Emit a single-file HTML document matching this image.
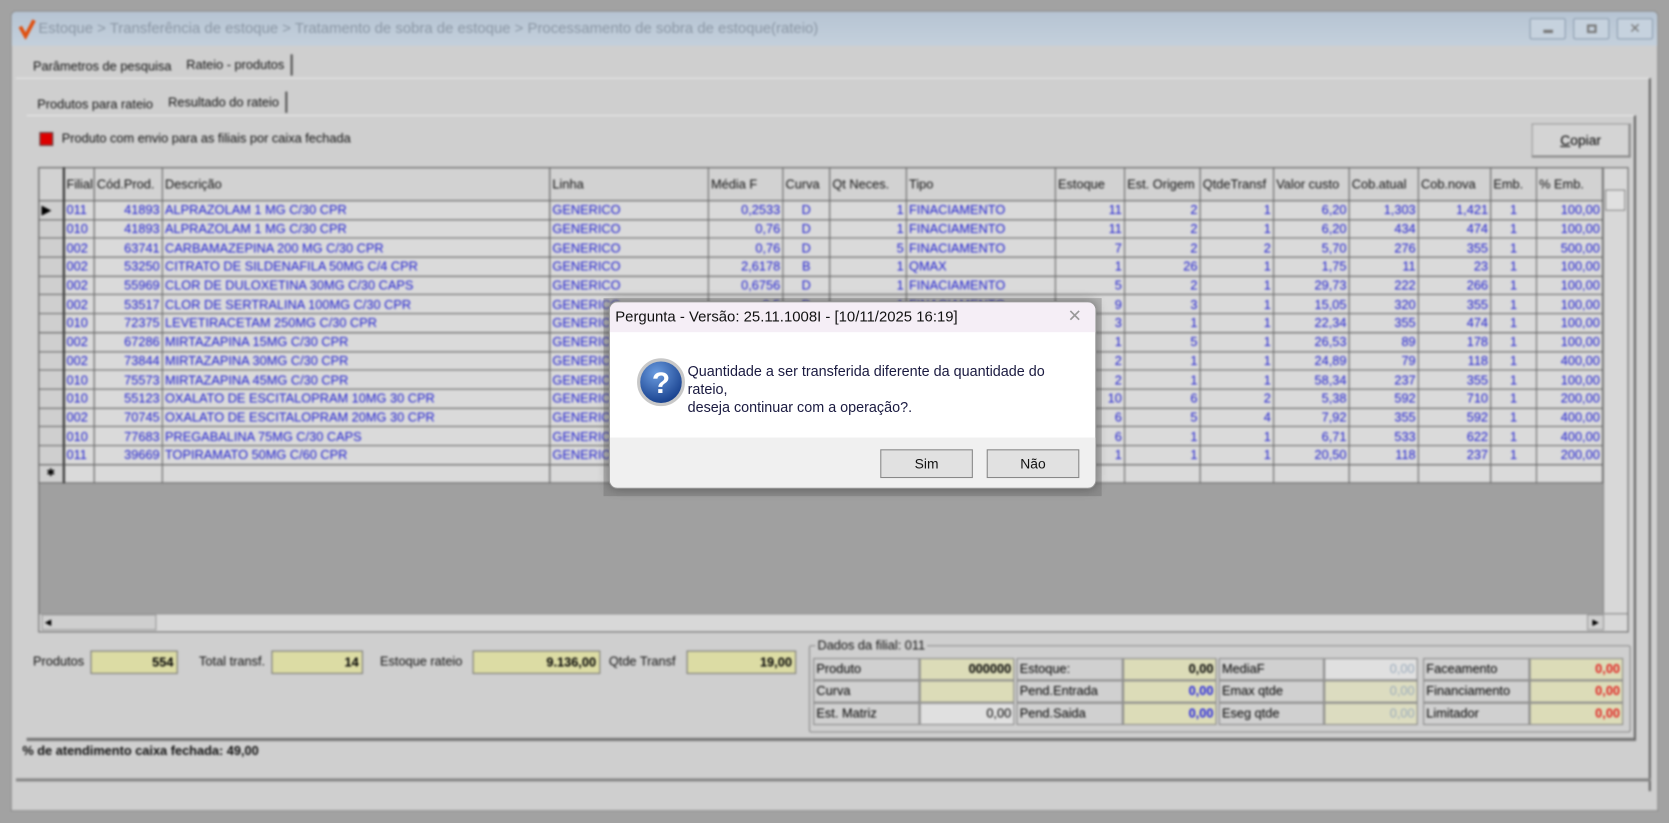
<!DOCTYPE html>
<html><head><meta charset="utf-8"><style>
*{box-sizing:border-box;margin:0;padding:0}
html,body{width:1669px;height:823px;overflow:hidden;background:#a2a2a2}
#s{position:absolute;left:0;top:0;width:1568px;height:773px;transform:scale(1.06441,1.0647);transform-origin:0 0;font-family:"Liberation Sans Narrow","Liberation Sans",sans-serif}
#bg{position:absolute;left:0;top:0;width:1568px;height:773px;filter:blur(0.9px);background:#a2a2a2}
.a{position:absolute}
.win{left:10px;top:10px;width:1548px;height:752px;background:#cfcfcf;border:1px solid #8a8a8a;border-radius:5px 5px 0 0}
.tb{left:0;top:0;width:1546px;height:32px;background:linear-gradient(#b6c4d3,#c4d0dc);border-radius:4px 4px 0 0}
.tt{left:25px;top:7px;font-size:14px;color:#8a96a4;font-family:"Liberation Sans",sans-serif}
.wb{top:6px;width:34px;height:20px;border:1px solid #8c9cae;background:#c6d2de;border-radius:2px}
.tab{font-size:12px;color:#111;height:20px;padding:3px 6px}
table{border-collapse:collapse;table-layout:fixed;font-size:12px}
td{border:1px solid #6c6c6c;height:17.7px;padding:0 2px;white-space:nowrap;overflow:hidden;color:#2020d0;line-height:16px}
th{border:1px solid #6c6c6c;height:31px;font-weight:normal;text-align:left;padding:0 2px;color:#111;background:#d2d2d2;white-space:nowrap;overflow:hidden}
td.r{text-align:right}td.c{text-align:center}
td.h{background:#cfcfcf;border-right:2px solid #333}
tbody tr{background:#dadada}
.lbl{font-size:12px;color:#111}
.yb{background:#dcdca4;border:1px solid #777;font-size:12px;font-weight:bold;text-align:right;padding:1px 3px;height:22px;line-height:18px}
.fc{border:1px solid #888;font-size:12px;height:21px;line-height:19px;padding:0 2px;background:#d0d0d0}
.fy{background:#dcdcb8;text-align:right;font-weight:bold}
#dlg{left:572px;top:283px;width:458px;height:176px;background:#fff;border:1px solid #999;border-radius:8px;overflow:hidden;box-shadow:0 0 10px rgba(0,0,0,.35);font-family:"Liberation Sans",sans-serif}
.btn{top:138px;width:87px;height:27px;border:1px solid #888;background:#e1e1e1;font-size:13px;text-align:center;line-height:25px;color:#111}
</style></head><body><div id="s">
<div id="bg">
<div class="a win">
 <div class="a tb"></div>
 <svg class="a" style="left:6px;top:6px" width="18" height="20"><path d="M2 8 L7 17 L15 2" stroke="#e05010" stroke-width="3.5" fill="none"/></svg>
 <div class="a tt">Estoque &gt; Transferência de estoque &gt; Tratamento de sobra de estoque &gt; Processamento de sobra de estoque(rateio)</div>
 <div class="a wb" style="left:1426px"><div class="a" style="left:12px;top:10px;width:9px;height:3px;background:#777"></div></div>
 <div class="a wb" style="left:1467px"><div class="a" style="left:12px;top:5px;width:9px;height:8px;border:2px solid #777"></div></div>
 <div class="a wb" style="left:1508px;font-size:13px;color:#777;text-align:center;line-height:18px">✕</div>
 <div class="a tab" style="left:14px;top:41px">Parâmetros de pesquisa</div>
 <div class="a tab" style="left:158px;top:40px;border-right:2px solid #555">Rateio - produtos</div>
 <div class="a" style="left:4px;top:62px;width:1536px;height:670px;border-top:1px solid #e8e8e8;border-right:2px solid #666"></div>
 <div class="a tab" style="left:18px;top:77px">Produtos para rateio</div>
 <div class="a tab" style="left:141px;top:75px;border-right:2px solid #555">Resultado do rateio</div>
 <div class="a" style="left:14px;top:97px;width:1512px;height:588px;border-top:1px solid #e8e8e8;border-right:2px solid #666;border-bottom:3px solid #777"></div>
 <div class="a" style="left:26px;top:113px;width:13px;height:13px;background:#d00;border:1px solid #555"></div>
 <div class="a lbl" style="left:47px;top:112px">Produto com envio para as filiais por caixa fechada</div>
 <div class="a" style="left:1428px;top:105px;width:93px;height:32px;border:1px solid #999;border-bottom:2px solid #888;border-right:2px solid #888;background:#d4d4d4;font-size:13px;text-align:center;line-height:30px"><u>C</u>opiar</div>
 <div class="a" style="left:25px;top:146px;width:1494px;height:437px;background:#a0a0a0;border:1px solid #666"></div>
 <table class="a" style="left:25px;top:146px;width:1470px">
 <colgroup><col style="width:23px"><col style="width:29px"><col style="width:64px"><col style="width:364px"><col style="width:149px"><col style="width:70px"><col style="width:44px"><col style="width:72px"><col style="width:140px"><col style="width:65px"><col style="width:71px"><col style="width:69px"><col style="width:71px"><col style="width:65px"><col style="width:68px"><col style="width:43px"><col style="width:62px"></colgroup>
 <thead><tr><th style="border-right:2px solid #333"></th><th>Filial</th><th>Cód.Prod.</th><th>Descrição</th><th>Linha</th><th>Média F</th><th>Curva</th><th>Qt Neces.</th><th>Tipo</th><th>Estoque</th><th>Est. Origem</th><th>QtdeTransf</th><th>Valor custo</th><th>Cob.atual</th><th>Cob.nova</th><th>Emb.</th><th>% Emb.</th></tr></thead>
 <tbody>
 <tr><td class="h" style="color:#000">▶</td><td>011</td><td class="r">41893</td><td>ALPRAZOLAM 1 MG C/30 CPR</td><td>GENERICO</td><td class="r">0,2533</td><td class="c">D</td><td class="r">1</td><td>FINACIAMENTO</td><td class="r">11</td><td class="r">2</td><td class="r">1</td><td class="r">6,20</td><td class="r">1,303</td><td class="r">1,421</td><td class="c">1</td><td class="r">100,00</td></tr>
 <tr><td class="h"></td><td>010</td><td class="r">41893</td><td>ALPRAZOLAM 1 MG C/30 CPR</td><td>GENERICO</td><td class="r">0,76</td><td class="c">D</td><td class="r">1</td><td>FINACIAMENTO</td><td class="r">11</td><td class="r">2</td><td class="r">1</td><td class="r">6,20</td><td class="r">434</td><td class="r">474</td><td class="c">1</td><td class="r">100,00</td></tr>
 <tr><td class="h"></td><td>002</td><td class="r">63741</td><td>CARBAMAZEPINA 200 MG C/30 CPR</td><td>GENERICO</td><td class="r">0,76</td><td class="c">D</td><td class="r">5</td><td>FINACIAMENTO</td><td class="r">7</td><td class="r">2</td><td class="r">2</td><td class="r">5,70</td><td class="r">276</td><td class="r">355</td><td class="c">1</td><td class="r">500,00</td></tr>
 <tr><td class="h"></td><td>002</td><td class="r">53250</td><td>CITRATO DE SILDENAFILA 50MG C/4 CPR</td><td>GENERICO</td><td class="r">2,6178</td><td class="c">B</td><td class="r">1</td><td>QMAX</td><td class="r">1</td><td class="r">26</td><td class="r">1</td><td class="r">1,75</td><td class="r">11</td><td class="r">23</td><td class="c">1</td><td class="r">100,00</td></tr>
 <tr><td class="h"></td><td>002</td><td class="r">55969</td><td>CLOR DE DULOXETINA 30MG C/30 CAPS</td><td>GENERICO</td><td class="r">0,6756</td><td class="c">D</td><td class="r">1</td><td>FINACIAMENTO</td><td class="r">5</td><td class="r">2</td><td class="r">1</td><td class="r">29,73</td><td class="r">222</td><td class="r">266</td><td class="c">1</td><td class="r">100,00</td></tr>
 <tr><td class="h"></td><td>002</td><td class="r">53517</td><td>CLOR DE SERTRALINA 100MG C/30 CPR</td><td>GENERICO</td><td class="r">0,5</td><td class="c">D</td><td class="r">1</td><td>FINACIAMENTO</td><td class="r">9</td><td class="r">3</td><td class="r">1</td><td class="r">15,05</td><td class="r">320</td><td class="r">355</td><td class="c">1</td><td class="r">100,00</td></tr>
 <tr><td class="h"></td><td>010</td><td class="r">72375</td><td>LEVETIRACETAM 250MG C/30 CPR</td><td>GENERICO</td><td class="r">0,2</td><td class="c">D</td><td class="r">1</td><td>FINACIAMENTO</td><td class="r">3</td><td class="r">1</td><td class="r">1</td><td class="r">22,34</td><td class="r">355</td><td class="r">474</td><td class="c">1</td><td class="r">100,00</td></tr>
 <tr><td class="h"></td><td>002</td><td class="r">67286</td><td>MIRTAZAPINA 15MG C/30 CPR</td><td>GENERICO</td><td class="r">0,3</td><td class="c">D</td><td class="r">1</td><td>FINACIAMENTO</td><td class="r">1</td><td class="r">5</td><td class="r">1</td><td class="r">26,53</td><td class="r">89</td><td class="r">178</td><td class="c">1</td><td class="r">100,00</td></tr>
 <tr><td class="h"></td><td>002</td><td class="r">73844</td><td>MIRTAZAPINA 30MG C/30 CPR</td><td>GENERICO</td><td class="r">0,7</td><td class="c">D</td><td class="r">1</td><td>FINACIAMENTO</td><td class="r">2</td><td class="r">1</td><td class="r">1</td><td class="r">24,89</td><td class="r">79</td><td class="r">118</td><td class="c">1</td><td class="r">400,00</td></tr>
 <tr><td class="h"></td><td>010</td><td class="r">75573</td><td>MIRTAZAPINA 45MG C/30 CPR</td><td>GENERICO</td><td class="r">0,2</td><td class="c">D</td><td class="r">1</td><td>FINACIAMENTO</td><td class="r">2</td><td class="r">1</td><td class="r">1</td><td class="r">58,34</td><td class="r">237</td><td class="r">355</td><td class="c">1</td><td class="r">100,00</td></tr>
 <tr><td class="h"></td><td>010</td><td class="r">55123</td><td>OXALATO DE ESCITALOPRAM 10MG 30 CPR</td><td>GENERICO</td><td class="r">0,5</td><td class="c">D</td><td class="r">2</td><td>FINACIAMENTO</td><td class="r">10</td><td class="r">6</td><td class="r">2</td><td class="r">5,38</td><td class="r">592</td><td class="r">710</td><td class="c">1</td><td class="r">200,00</td></tr>
 <tr><td class="h"></td><td>002</td><td class="r">70745</td><td>OXALATO DE ESCITALOPRAM 20MG 30 CPR</td><td>GENERICO</td><td class="r">0,3</td><td class="c">D</td><td class="r">4</td><td>FINACIAMENTO</td><td class="r">6</td><td class="r">5</td><td class="r">4</td><td class="r">7,92</td><td class="r">355</td><td class="r">592</td><td class="c">1</td><td class="r">400,00</td></tr>
 <tr><td class="h"></td><td>010</td><td class="r">77683</td><td>PREGABALINA 75MG C/30 CAPS</td><td>GENERICO</td><td class="r">0,3</td><td class="c">D</td><td class="r">1</td><td>FINACIAMENTO</td><td class="r">6</td><td class="r">1</td><td class="r">1</td><td class="r">6,71</td><td class="r">533</td><td class="r">622</td><td class="c">1</td><td class="r">400,00</td></tr>
 <tr><td class="h"></td><td>011</td><td class="r">39669</td><td>TOPIRAMATO 50MG C/60 CPR</td><td>GENERICO</td><td class="r">0,3</td><td class="c">D</td><td class="r">1</td><td>FINACIAMENTO</td><td class="r">1</td><td class="r">1</td><td class="r">1</td><td class="r">20,50</td><td class="r">118</td><td class="r">237</td><td class="c">1</td><td class="r">200,00</td></tr>
 <tr><td class="h" style="color:#000;font-size:10px;text-align:center">✱</td><td></td><td></td><td></td><td></td><td></td><td></td><td></td><td></td><td></td><td></td><td></td><td></td><td></td><td></td><td></td><td></td></tr>
 </tbody></table>
 <div class="a" style="left:1495px;top:147px;width:23px;height:418px;background:#d8d8d8;border-left:1px solid #888"></div>
 <div class="a" style="left:1497px;top:167px;width:19px;height:20px;background:#e0e0e0;border:1px solid #888"></div>
 <div class="a" style="left:26px;top:565px;width:1492px;height:17px;background:#d8d8d8;border-top:1px solid #888"></div>
 <div class="a" style="left:28px;top:566px;width:108px;height:15px;background:#cfcfcf;border:1px solid #999;font-size:8px;line-height:13px;padding-left:2px">◀</div>
 <div class="a" style="left:1480px;top:566px;width:16px;height:15px;background:#cfcfcf;border:1px solid #999;font-size:8px;line-height:13px;padding-left:4px">▶</div>
 <div class="a lbl" style="left:20px;top:603px">Produtos</div>
 <div class="a yb" style="left:74px;top:600px;width:82px">554</div>
 <div class="a lbl" style="left:176px;top:603px">Total transf.</div>
 <div class="a yb" style="left:244px;top:600px;width:86px">14</div>
 <div class="a lbl" style="left:346px;top:603px">Estoque rateio</div>
 <div class="a yb" style="left:433px;top:600px;width:120px">9.136,00</div>
 <div class="a lbl" style="left:561px;top:603px">Qtde Transf</div>
 <div class="a yb" style="left:634px;top:600px;width:103px">19,00</div>
 <div class="a" style="left:749px;top:595px;width:772px;height:82px;border:1px solid #888;border-radius:2px"></div>
 <div class="a lbl" style="left:755px;top:588px;background:#cfcfcf;padding:0 2px">Dados da filial: 011</div>
 <div class="a fc" style="left:753px;top:607px;width:100px">Produto</div><div class="a fc fy" style="left:853px;top:607px;width:89px">000000</div>
 <div class="a fc" style="left:753px;top:628px;width:100px">Curva</div><div class="a fc fy" style="left:853px;top:628px;width:89px"></div>
 <div class="a fc" style="left:753px;top:649px;width:100px">Est. Matriz</div><div class="a fc" style="left:853px;top:649px;width:89px;background:#e0e0e0;text-align:right">0,00</div>
 <div class="a fc" style="left:944px;top:607px;width:100px">Estoque:</div><div class="a fc fy" style="left:1044px;top:607px;width:88px">0,00</div>
 <div class="a fc" style="left:944px;top:628px;width:100px">Pend.Entrada</div><div class="a fc fy" style="left:1044px;top:628px;width:88px;color:#2020e0">0,00</div>
 <div class="a fc" style="left:944px;top:649px;width:100px">Pend.Saida</div><div class="a fc fy" style="left:1044px;top:649px;width:88px;color:#2020e0">0,00</div>
 <div class="a fc" style="left:1134px;top:607px;width:99px">MediaF</div><div class="a fc" style="left:1233px;top:607px;width:88px;background:#e0e0e0;text-align:right;color:#9ab">0,00</div>
 <div class="a fc" style="left:1134px;top:628px;width:99px">Emax qtde</div><div class="a fc" style="left:1233px;top:628px;width:88px;background:#dcdcc0;text-align:right;color:#9ab">0,00</div>
 <div class="a fc" style="left:1134px;top:649px;width:99px">Eseg qtde</div><div class="a fc" style="left:1233px;top:649px;width:88px;background:#dcdcc0;text-align:right;color:#9ab">0,00</div>
 <div class="a fc" style="left:1326px;top:607px;width:100px">Faceamento</div><div class="a fc fy" style="left:1426px;top:607px;width:88px;color:#e02020">0,00</div>
 <div class="a fc" style="left:1326px;top:628px;width:100px">Financiamento</div><div class="a fc fy" style="left:1426px;top:628px;width:88px;color:#e02020">0,00</div>
 <div class="a fc" style="left:1326px;top:649px;width:100px">Limitador</div><div class="a fc fy" style="left:1426px;top:649px;width:88px;color:#e02020">0,00</div>
 <div class="a" style="left:10px;top:687px;font-size:12px;font-weight:bold;color:#111">% de atendimento caixa fechada: 49,00</div>
 <div class="a" style="left:4px;top:720px;width:1536px;height:3px;background:#888"></div>
</div>
</div>
<div class="a" style="left:567px;top:280px;width:468px;height:186px;background:rgba(100,100,100,.35)"></div>
<div id="dlg" class="a">
 <div class="a" style="left:0;top:0;width:458px;height:28px;background:#f5eef6"></div>
 <div class="a" style="left:5px;top:5px;font-size:14px;color:#111">Pergunta - Versão: 25.11.1008I - [10/11/2025 16:19]</div>
 <div class="a" style="left:430px;top:3px;font-size:16px;color:#999">✕</div>
 <svg class="a" style="left:25px;top:52px" width="46" height="46"><defs><radialGradient id="g" cx="40%" cy="30%" r="70%"><stop offset="0" stop-color="#6b9ce0"/><stop offset="1" stop-color="#163f8c"/></radialGradient></defs><circle cx="23" cy="23" r="21" fill="url(#g)" stroke="#c8c8c8" stroke-width="3"/><text x="23" y="33" text-anchor="middle" font-family="Liberation Sans" font-weight="bold" font-size="28" fill="#fff">?</text></svg>
 <div class="a" style="left:73px;top:56px;font-size:13.5px;color:#1a1a40;line-height:17px">Quantidade a ser transferida diferente da quantidade do<br>rateio,<br>deseja continuar com a operação?.</div>
 <div class="a" style="left:0;top:127px;width:458px;height:49px;background:#f0f0f0"></div>
 <div class="a btn" style="left:254px">Sim</div>
 <div class="a btn" style="left:354px">Não</div>
</div>
</div></body></html>
